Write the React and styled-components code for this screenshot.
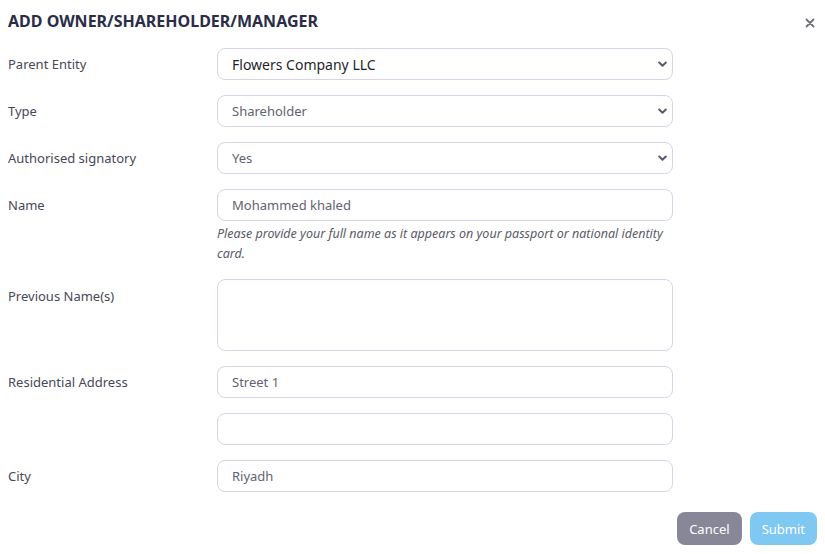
import React from "react";
import styled, { createGlobalStyle } from "styled-components";

const GlobalStyle = createGlobalStyle`
  body {
    margin: 0;
    background: #ffffff;
    font-family: "Noto Sans", "Open Sans", sans-serif;
  }
`;

const Modal = styled.div`
  width: 825px;
  height: 554px;
  box-sizing: border-box;
  padding: 10px 8px 0 8px;
  display: flex;
  flex-direction: column;
`;

const Header = styled.div`
  display: flex;
  align-items: center;
  justify-content: space-between;
  height: 22px;
  margin-bottom: 16px;
`;

const Title = styled.h2`
  margin: 0;
  font-size: 16px;
  font-weight: 700;
  color: #2b2d48;
`;

const Close = styled.button`
  border: none;
  background: none;
  padding: 0;
  margin-right: 1px;
  margin-top: 4px;
  width: 12px;
  height: 12px;
  display: flex;
  align-items: center;
  justify-content: center;
  cursor: pointer;
`;

const Form = styled.div`
  display: grid;
  grid-template-columns: 209px 456px;
  row-gap: 15px;
`;

const Label = styled.div`
  font-size: 13px;
  color: #474858;
  padding-top: ${(p) => (p.$top ? 8 : 7)}px;
  line-height: 18px;
`;

const Field = styled.div`
  display: flex;
  flex-direction: column;
`;

const Box = styled.div`
  box-sizing: border-box;
  height: ${(p) => p.$h || 32}px;
  border: 1px solid #d6d4e6;
  border-radius: 8px;
  padding: 0 5px 0 14px;
  display: flex;
  align-items: center;
  justify-content: space-between;
  font-size: ${(p) => (p.$dark ? 14 : 13)}px;
  color: ${(p) => (p.$dark ? "#1f1f2a" : "#62636f")};
  background: #fff;
`;

const Help = styled.div`
  font-size: 12.5px;
  font-style: italic;
  color: #5a5b68;
  line-height: 20px;
  margin-top: 3px;
`;

const Footer = styled.div`
  display: flex;
  justify-content: flex-end;
  gap: 8px;
  margin-top: 20px;
`;

const Button = styled.button`
  height: 33px;
  padding: 0 ${(p) => p.$px}px;
  border: none;
  border-radius: 8px;
  font-family: inherit;
  font-size: 13px;
  color: #ffffff;
  background: ${(p) => p.$bg};
  cursor: pointer;
`;

const Chevron = () => (
  <svg width="9" height="7" viewBox="0 0 9 7">
    <path d="M1.2 1.5 L4.5 4.8 L7.8 1.5" fill="none" stroke="#5b5b6b" strokeWidth="2" strokeLinecap="round" strokeLinejoin="round" />
  </svg>
);

const Row = ({ label, top, children }) => (
  <>
    <Label $top={top}>{label}</Label>
    <Field>{children}</Field>
  </>
);

export default function App() {
  return (
    <Modal>
      <GlobalStyle />
      <Header>
        <Title>ADD OWNER/SHAREHOLDER/MANAGER</Title>
        <Close aria-label="close">
          <svg width="10" height="10" viewBox="0 0 10 10">
            <path d="M1.5 1.5 L8.5 8.5 M8.5 1.5 L1.5 8.5" stroke="#6f6f7a" strokeWidth="1.8" strokeLinecap="round" />
          </svg>
        </Close>
      </Header>
      <Form>
        <Row label="Parent Entity">
          <Box $dark>
            Flowers Company LLC
            <Chevron />
          </Box>
        </Row>
        <Row label="Type">
          <Box>
            Shareholder
            <Chevron />
          </Box>
        </Row>
        <Row label="Authorised signatory">
          <Box>
            Yes
            <Chevron />
          </Box>
        </Row>
        <Row label="Name">
          <Box>Mohammed khaled</Box>
          <Help>
            Please provide your full name as it appears on your passport or national identity card.
          </Help>
        </Row>
        <Row label="Previous Name(s)" top>
          <Box $h={72} />
        </Row>
        <Row label="Residential Address">
          <Box>Street 1</Box>
        </Row>
        <Row label="">
          <Box />
        </Row>
        <Row label="City">
          <Box>Riyadh</Box>
        </Row>
      </Form>
      <Footer>
        <Button $bg="#878797" $px={12}>Cancel</Button>
        <Button $bg="#7fc8f2" $px={12}>Submit</Button>
      </Footer>
    </Modal>
  );
}
